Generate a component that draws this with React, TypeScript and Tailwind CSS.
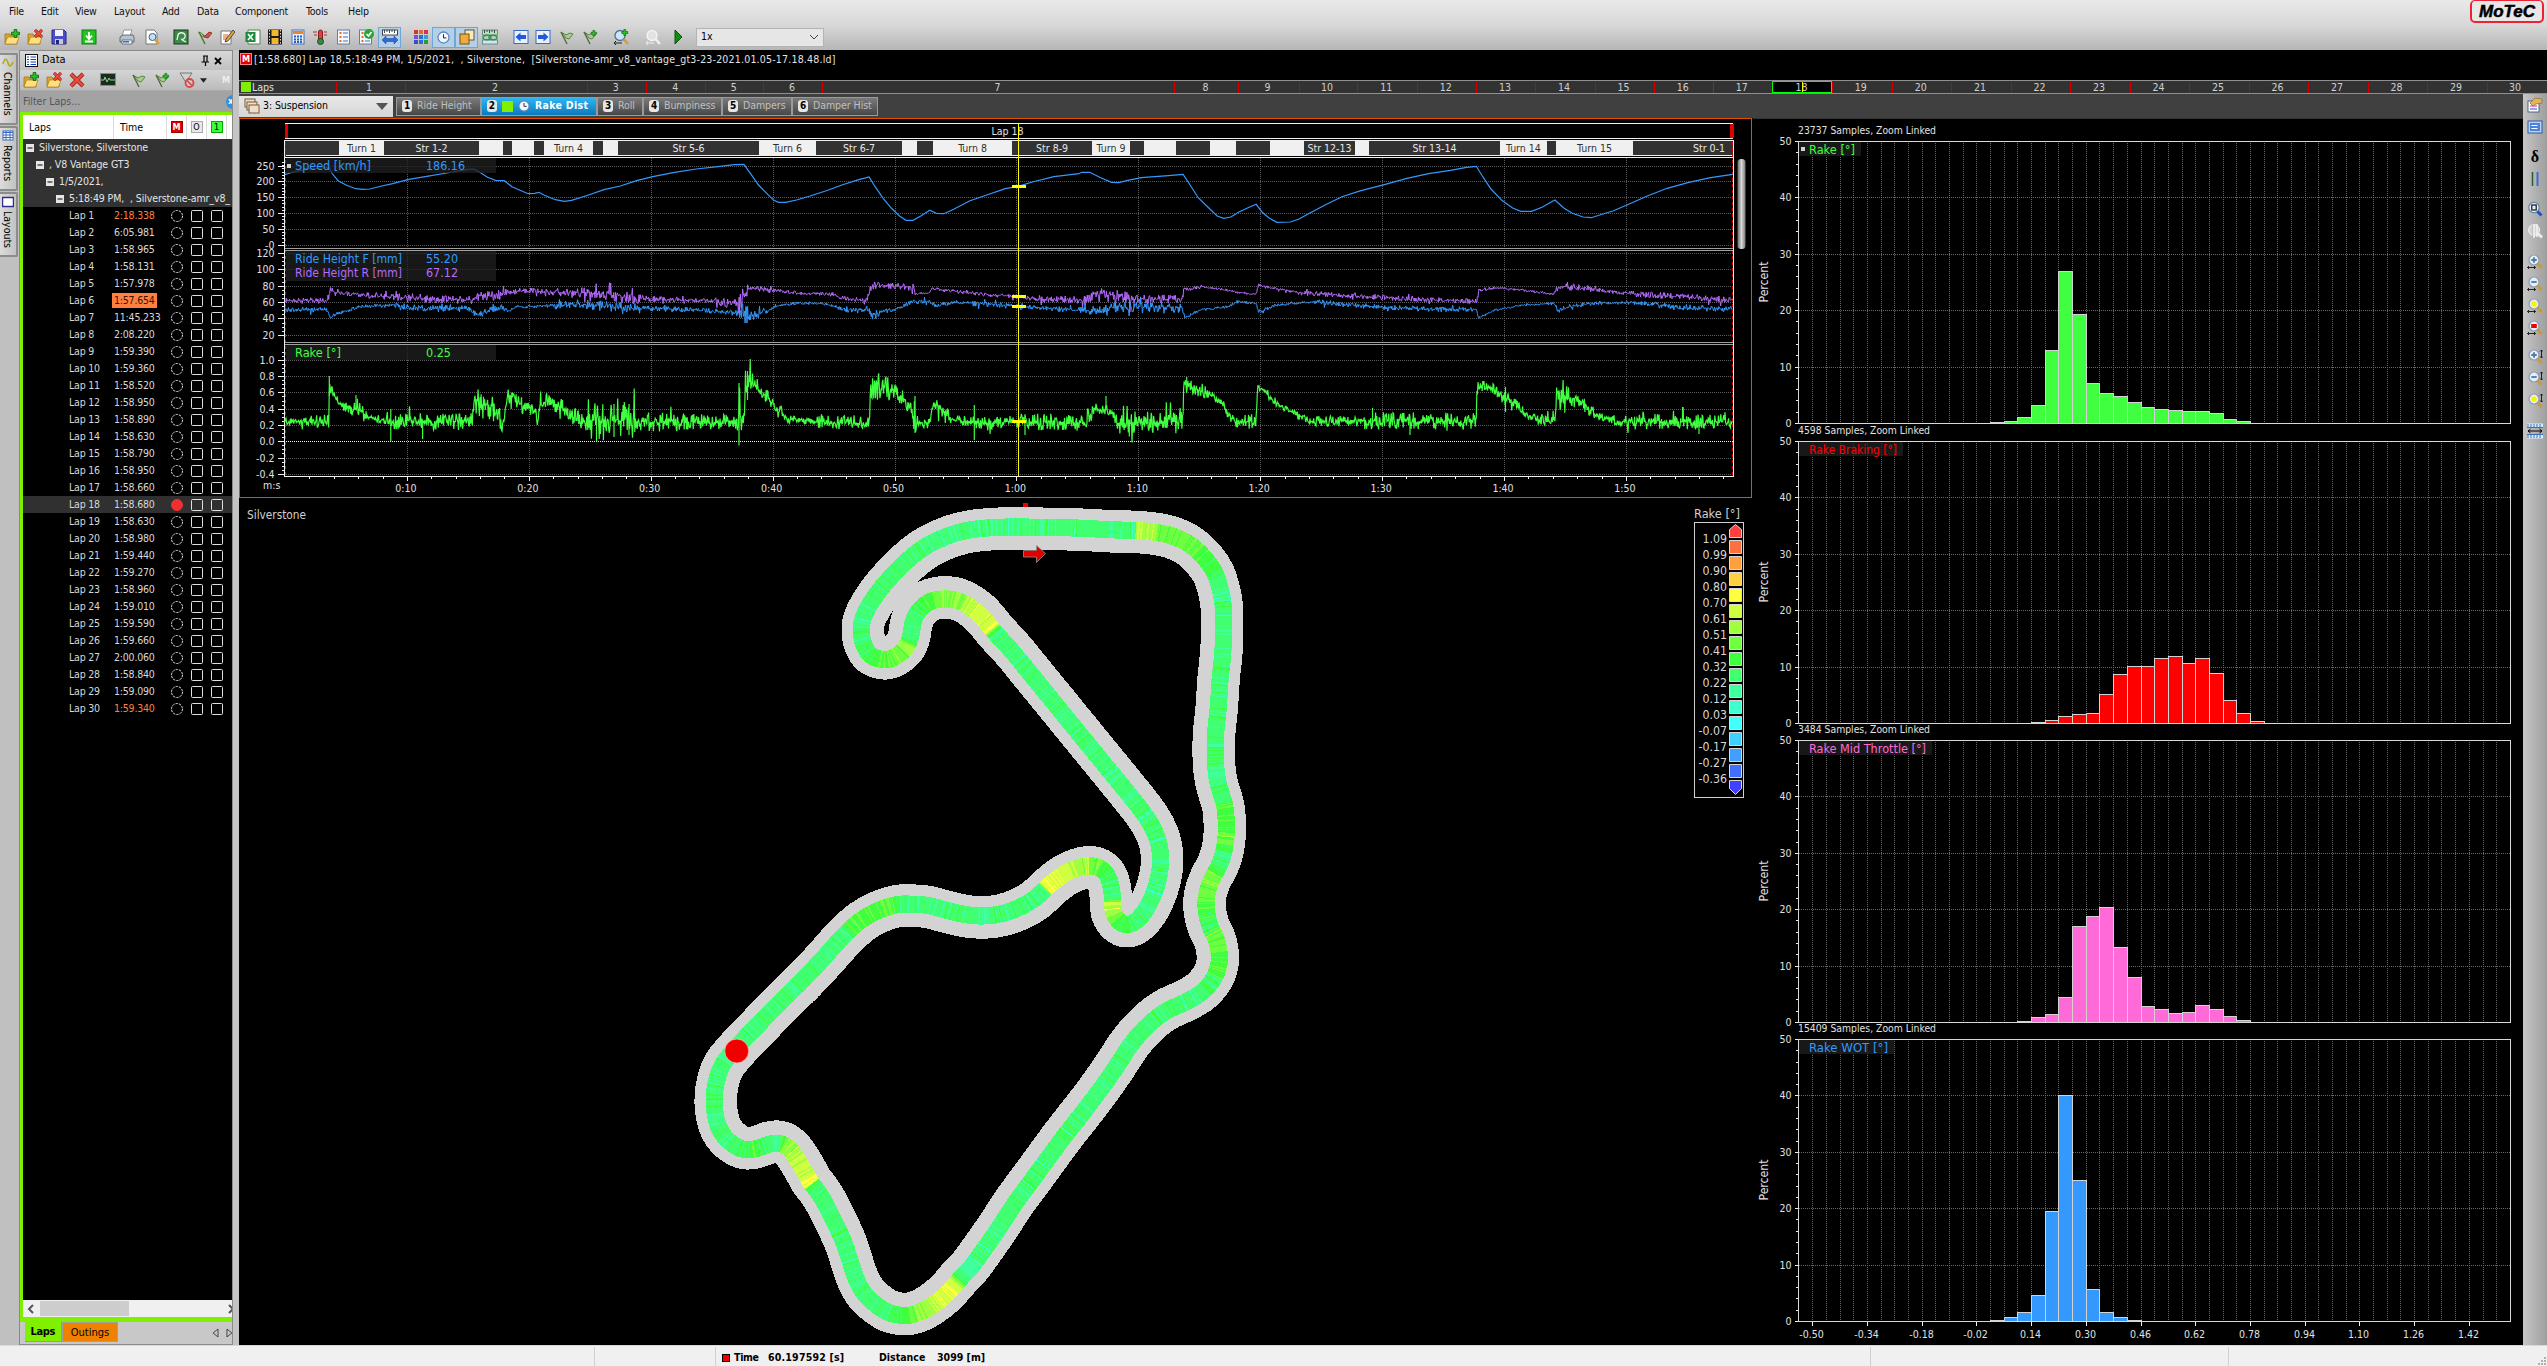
import React from "react";

const TAHOMA = "font-['DejaVu_Sans_Condensed','Noto_Sans',sans-serif]";
const SVG_FONT = '"DejaVu Sans Condensed","Noto Sans",sans-serif';

/* ---------- shared helpers ---------- */

function makeRandom(seed: number) {
  let a = seed;
  return () => {
    a = (a + 0x6d2b79f5) | 0;
    let t = Math.imul(a ^ (a >>> 15), 1 | a);
    t = (t + Math.imul(t ^ (t >>> 7), 61 | t)) ^ t;
    return ((t ^ (t >>> 14)) >>> 0) / 4294967296;
  };
}

type LabelProps = {
  x: number;
  y: number;
  children: React.ReactNode;
  size?: number;
  fill?: string;
  anchor?: "start" | "middle" | "end";
  w?: number;
};

function Label({ x, y, children, size = 10.5, fill = "#e0e0e0", anchor = "start", w }: LabelProps) {
  return (
    <text
      x={x}
      y={y + size * 0.36}
      fontSize={size}
      fill={fill}
      textAnchor={anchor}
      fontFamily={SVG_FONT}
      textLength={w}
      lengthAdjust="spacingAndGlyphs"
    >
      {children}
    </text>
  );
}

/* ---------- icons ---------- */

type IconProps = { children: React.ReactNode; s?: number };
const Ico = ({ children, s = 16 }: IconProps) => (
  <svg width={s} height={s} viewBox="0 0 16 16" className="block shrink-0">
    {children}
  </svg>
);

const FolderShape = () => (
  <>
    <path d="M1 5h5l1 2h6v8H1z" fill="#d9a52b" stroke="#9a7010" strokeWidth=".7" />
    <path d="M3.5 8H15l-2.5 7H1z" fill="#ffdf7e" stroke="#a87b18" strokeWidth=".7" />
  </>
);
const PlusMark = ({ x = 12, y = 4 }) => (
  <g transform={`translate(${x} ${y})`}>
    <path d="M-1.3-4h2.6v2.7H4v2.6H1.3V4h-2.6V1.3H-4v-2.6h2.7z" fill="#22c722" stroke="#075c07" strokeWidth=".8" />
  </g>
);
const FolderAdd = () => (<Ico><FolderShape /><PlusMark x={11.5} y={4.5} /></Ico>);
const FolderRemove = () => (
  <Ico><FolderShape /><path d="M8 1l7 7M15 1L8 8" stroke="#8a1010" strokeWidth="3" /><path d="M8 1l7 7M15 1L8 8" stroke="#e84a3c" strokeWidth="2" /></Ico>
);
const Disk = () => (
  <Ico><path d="M1 1h12l2 2v12H1z" fill="#4b50c8" stroke="#22267e" /><path d="M4 1h8v6H4z" fill="#f2f2ff" /><path d="M4 10h8v5H4z" fill="#c8c8da" /><path d="M5 11h3v4H5z" fill="#22267e" /></Ico>
);
const Download = () => (
  <Ico><rect x="1" y="1" width="14" height="14" fill="#21c421" stroke="#0f7f0f" /><path d="M8 3v6M5 6.5L8 10l3-3.500M4 12.500h8" stroke="#fff" strokeWidth="1.800" fill="none" /></Ico>
);
const Printer = () => (
  <Ico><path d="M5 1h8l-2 6H3z" fill="#fff" stroke="#777" strokeWidth=".7" /><path d="M1 8l3-2h10l1 2v5H1z" fill="#b9c3cf" stroke="#4a5563" strokeWidth=".8" /><path d="M3 11h10v4H3z" fill="#e9eef5" stroke="#4a5563" strokeWidth=".7" /><rect x="4" y="12" width="6" height="1.500" fill="#2b6fd0" /></Ico>
);
const Preview = () => (
  <Ico><path d="M2 1h8l3 3v11H2z" fill="#fff" stroke="#777" /><circle cx="8.500" cy="8" r="3.500" fill="#bfe0fa" stroke="#466" /><path d="M11 11l4 4" stroke="#d9a030" strokeWidth="2.300" /></Ico>
);
const GreenTrack = () => (
  <Ico><rect x="1" y="1" width="14" height="14" fill="#3c8a47" stroke="#163b1b" /><path d="M4 11l1-5c1-3 6-3 7 0s-2 5-4 4M9 11l4 2" stroke="#e9f7e9" fill="none" strokeWidth="1.300" /></Ico>
);
const FlagRed = () => (
  <Ico><path d="M3 4l5 3 4-4 3 1-4 5-4-1z" fill="#e04a3c" stroke="#7a2a22" strokeWidth=".8" /><path d="M1.500 3l3 1 3 4-3-1z" fill="#a9cf8d" stroke="#4f7a3a" strokeWidth=".7" /><path d="M2 3l6 12" stroke="#4a7a3a" strokeWidth="1.500" /></Ico>
);
const EditPage = () => (
  <Ico><path d="M2 2h10v13H2z" fill="#fff" stroke="#777" /><path d="M4 6h5M4 8h5M4 10h4" stroke="#e05a20" /><path d="M14 1l2 2-7 9-3 1 1-3z" fill="#e0a040" stroke="#333" strokeWidth=".8" /></Ico>
);
const Excel = () => (
  <Ico><path d="M3 1h12v14H3z" fill="#fff" stroke="#4a8a4a" /><rect x="0.500" y="3" width="10" height="10" fill="#1f8a3c" /><path d="M3 5l5 6M8 5l-5 6" stroke="#fff" strokeWidth="1.600" /></Ico>
);
const Film = () => (
  <Ico><rect x="1" y="0.500" width="14" height="15" fill="#1a1a1a" /><rect x="4.500" y="1" width="7" height="6" fill="#f2b92d" /><rect x="4.500" y="9" width="7" height="6" fill="#f2b92d" /><path d="M2.500 1v14M13.500 1v14" stroke="#ddd" strokeDasharray="1.500 1.500" /></Ico>
);
const Calc = () => (
  <Ico><rect x="2" y="1" width="12" height="14" fill="#e8f0fb" stroke="#4672b8" /><rect x="3" y="2" width="10" height="3" fill="#e7842b" /><path d="M4 7.500h9M4 10.500h9M4 13h9" stroke="#2b5db8" strokeWidth="1.800" strokeDasharray="2 1" /></Ico>
);
const Thermo = () => (
  <Ico><rect x="6.500" y="1" width="4" height="11" rx="2" fill="#e04040" stroke="#7a1f1f" /><circle cx="8.500" cy="12.500" r="3" fill="#2f8f3c" stroke="#184d1f" /><path d="M1 3h4M2 6h3M12 3h3M12 6h3" stroke="#a33" /></Ico>
);
const ListPage = ({ check = false }) => (
  <Ico><rect x="1.500" y="1" width="12" height="14" fill="#f5f9ff" stroke="#5c7fae" /><path d="M3.500 4h2M3.500 8h2M3.500 12h2" stroke="#e07020" strokeWidth="1.800" /><path d="M7 4h5M7 8h5M7 12h5" stroke="#4070c0" />{check && (<><circle cx="11" cy="5" r="5" fill="#25a83a" /><path d="M8.500 5l2 2 3-4" stroke="#fff" strokeWidth="1.600" fill="none" /></>)}</Ico>
);
const RulerArrows = ({ green = false }) => (
  <Ico><rect x="0.500" y="1" width="15" height="5" fill={green ? "#bde0c0" : "#fff"} stroke={green ? "#4a7f86" : "#222"} strokeWidth=".8" /><path d="M2.500 1v3M5 1v2M7.500 1v3M10 1v2M12.500 1v3" stroke="#222" strokeWidth=".8" />{green ? <><rect x="0.500" y="11" width="15" height="4" fill="#cfe6f5" stroke="#4a7f86" strokeWidth=".8" /><ellipse cx="5" cy="8.500" rx="4" ry="2.300" fill="none" stroke="#2f9a3f" strokeWidth="1.500" /><ellipse cx="11" cy="8.500" rx="4" ry="2.300" fill="none" stroke="#2f9a3f" strokeWidth="1.500" /></> : <path d="M0 11l4-4v2.500h8V7l4 4-4 4v-2.500H4V15z" fill="#2f6bd8" stroke="#163f8a" strokeWidth=".5" />}</Ico>
);
const GridIcon = () => (
  <Ico>{["#e03030", "#e07020", "#d03060", "#7a4fd0", "#2f6bd8", "#2fa0d8", "#3a4fd0", "#2f6bd8", "#2b9a3c"].map((c, i) => (<rect key={i} x={1 + (i % 3) * 5} y={1 + Math.floor(i / 3) * 5} width="4" height="4" fill={c} />))}</Ico>
);
const Clock = ({ s = 16 }) => (
  <Ico s={s}><circle cx="8" cy="8" r="6.800" fill="#f2f8ff" stroke="#5b86c4" strokeWidth="1.600" /><path d="M8 4v4.500h3.500" stroke="#222" fill="none" strokeWidth="1.200" /></Ico>
);
const CopyIcon = () => (
  <Ico><rect x="6" y="1" width="9" height="10" fill="#ffe9b0" stroke="#555" /><rect x="1" y="5" width="9" height="10" fill="#efab3c" stroke="#7a5210" /></Ico>
);
const ArrowBtn = ({ flip = false }) => (
  <Ico><g transform={flip ? "translate(16 0) scale(-1 1)" : undefined}><rect x="1" y="1.500" width="14" height="13" fill="#e8f1ff" stroke="#3a6bc0" /><path d="M2.500 8l5-4.500V6H13v4H7.500v2.500z" fill="#2257d8" /></g></Ico>
);
const Flag = ({ plus = false }) => (
  <Ico><path d="M2 3l5 3 4-2 3 1-4 5-3-1z" fill="#a9cf8d" stroke="#4f7a3a" strokeWidth=".9" /><path d="M2 3l6 12" stroke="#4f6a3a" strokeWidth="1.400" />{plus && <g transform="translate(5.500 0) scale(.7)"><PlusMark x={9} y={6} /></g>}</Ico>
);
const Lens = ({ off = false, plus = false }) => (
  <Ico><circle cx="7" cy="6.500" r="5" fill={off ? "#e2e2e2" : "#cfe6fa"} stroke={off ? "#f4f4f4" : "#52708c"} strokeWidth="1.300" /><path d="M10.500 10l4.500 5" stroke={off ? "#efefef" : "#caa040"} strokeWidth="2.600" /><path d="M1 14h8M3 12l-2 2 2 2" stroke={off ? "#eee" : "#222"} fill="none" />{plus && <g transform="translate(5 -1) scale(.75)"><PlusMark x={9} y={6} /></g>}</Ico>
);
const Play = () => (<Ico><path d="M5 1l7 7-7 7z" fill="#138a13" stroke="#075607" /></Ico>);

const ZoomTool = ({ kind, vertical = false }: { kind: string; vertical?: boolean }) => (
  <Ico>
    <circle cx="7" cy="6" r="5" fill="#e3f0fc" stroke="#8a9bb0" strokeWidth="1.200" />
    <path d="M10.500 9.500l4 4.500" stroke="#c79a3c" strokeWidth="3" />
    {kind === "plus" && <path d="M7 3.300v5.400M4.300 6h5.400" stroke="#56789e" strokeWidth="1.800" />}
    {kind === "minus" && <path d="M4.300 6h5.400" stroke="#56789e" strokeWidth="1.800" />}
    {kind === "sun" && <circle cx="7" cy="6" r="2.800" fill="#fff200" />}
    {kind === "red" && <rect x="4.200" y="4" width="5.600" height="4" fill="#f00000" />}
    {vertical ? <path d="M14.500 1v8M13 2.500L14.500 1 16 2.500M13 7.500L14.500 9 16 7.500" stroke="#111" fill="none" strokeWidth=".9" /> : <path d="M.5 13.500h8M2 12L.5 13.500 2 15M7 12l1.500 1.500L7 15" stroke="#111" fill="none" strokeWidth=".9" />}
  </Ico>
);

/* ---------- top area ---------- */

const MENU: [string, string][] = [
  ["File", "w-[32px]"], ["Edit", "w-[34px]"], ["View", "w-[39px]"], ["Layout", "w-[48px]"], ["Add", "w-[35px]"],
  ["Data", "w-[38px]"], ["Component", "w-[71px]"], ["Tools", "w-[42px]"], ["Help", "w-[40px]"],
];

const Cell = ({ w, on = false, children }: { w: string; on?: boolean; children?: React.ReactNode }) => (
  <div className={`flex h-[21px] shrink-0 items-center justify-center ${w} ${on ? "border border-[#6da7d8] bg-[#b5d0e6]" : ""}`}>{children}</div>
);

function TopBars() {
  return (
    <div className="flex h-[50px] justify-between bg-gradient-to-b from-[#e9e9e9] via-[#d8d8d8] to-[#b6b6b6]">
      <div className="flex flex-col">
        <div className="flex h-6 items-center pl-[9px] text-[10.5px] tracking-[-0.2px] text-[#111]">
          {MENU.map(([m, w]) => (<span key={m} className={w}>{m}</span>))}
        </div>
        <div className="flex h-[26px] items-center">
          <Cell w="w-[23px]"><FolderAdd /></Cell>
          <Cell w="w-[24px]"><FolderRemove /></Cell>
          <Cell w="w-[23px]"><Disk /></Cell>
          <Cell w="w-[38px]"><Download /></Cell>
          <Cell w="w-[37px]"><Printer /></Cell>
          <Cell w="w-[14px]"><Preview /></Cell>
          <Cell w="w-[43px]"><GreenTrack /></Cell>
          <Cell w="w-[6px]"><FlagRed /></Cell>
          <Cell w="w-[38px]"><EditPage /></Cell>
          <Cell w="w-[14px]"><Excel /></Cell>
          <Cell w="w-[29px]"><Film /></Cell>
          <Cell w="w-[17px]"><Calc /></Cell>
          <Cell w="w-[28px]"><Thermo /></Cell>
          <Cell w="w-[20px]"><ListPage /></Cell>
          <Cell w="w-[24px]"><ListPage check /></Cell>
          <Cell w="w-[23px]" on><RulerArrows /></Cell>
          <Cell w="w-[31px]"><div className="pl-2"><GridIcon /></div></Cell>
          <Cell w="w-[23px]" on><Clock s={13} /></Cell>
          <Cell w="w-[23px]" on><CopyIcon /></Cell>
          <Cell w="w-[23px]"><RulerArrows green /></Cell>
          <Cell w="w-[39px]"><ArrowBtn /></Cell>
          <Cell w="w-[6px]"><ArrowBtn flip /></Cell>
          <Cell w="w-[41px]"><Flag /></Cell>
          <Cell w="w-[6px]"><Flag plus /></Cell>
          <Cell w="w-[56px]"><Lens plus /></Cell>
          <Cell w="w-[0px]"><div className="-mr-2"><Lens off /></div></Cell>
          <Cell w="w-[47px]"><div className="pl-[10px]"><Play /></div></Cell>
          <div className="flex h-[19px] w-[128px] items-center justify-between border border-[#b4b4b4] bg-[#e6e6e6] px-1 text-[10.5px] text-black">
            <span>1x</span>
            <svg width="10" height="6" viewBox="0 0 10 6"><path d="M1 1l4 4 4-4" fill="none" stroke="#444" /></svg>
          </div>
        </div>
      </div>
      <div className="mr-[3px] flex h-[23px] w-[74px] items-center justify-center rounded-[5px] border-2 border-t-1 border-[#ee2235] bg-[#e8e8e8]">
        <span className="pt-[1px] font-['Liberation_Sans',sans-serif] text-[17px] leading-none font-bold text-black italic [-webkit-text-stroke:0.5px_black]">MoTeC</span>
      </div>
    </div>
  );
}

/* ---------- data panel ---------- */

const LAPS = [
  "2:18.338", "6:05.981", "1:58.965", "1:58.131", "1:57.978", "1:57.654", "11:45.233", "2:08.220", "1:59.390", "1:59.360",
  "1:58.520", "1:58.950", "1:58.890", "1:58.630", "1:58.790", "1:58.950", "1:58.660", "1:58.680", "1:58.630", "1:58.980",
  "1:59.440", "1:59.270", "1:58.960", "1:59.010", "1:59.590", "1:59.660", "2:00.060", "1:58.840", "1:59.090", "1:59.340",
];

const TREE: [string, string][] = [
  ["pl-[3px]", "Silverstone, Silverstone"],
  ["pl-[13px]", ", V8 Vantage GT3"],
  ["pl-[23px]", "1/5/2021,"],
  ["pl-[33px]", "5:18:49 PM,  , Silverstone-amr_v8_"],
];

function SideTab({ h, label, children }: { h: string; label: string; children: React.ReactNode }) {
  return (
    <div className={`mb-[1px] flex w-[18px] flex-col items-center gap-[3px] rounded-r-[2px] border-2 border-l-0 border-[#8c8c8c] bg-gradient-to-r from-[#dcdcdc] to-[#c2c2c2] pt-[2px] ${h}`}>
      <svg width="12" height="12" viewBox="0 0 12 12" className="shrink-0">{children}</svg>
      <span className="text-[10.5px] leading-none text-black [writing-mode:vertical-rl]">{label}</span>
    </div>
  );
}

function LapRow({ n, time }: { n: number; time: string }) {
  const sel = n === 18;
  const color = n === 6 ? "bg-[#ff8040] text-[#3a1400]" : n === 1 || n === 30 ? "text-[#ff8040]" : "text-[#d8d8d8]";
  return (
    <div className={`flex h-[17px] items-center text-[10.5px] tracking-[-0.2px] ${sel ? "bg-[#303030]" : ""}`}>
      <span className="w-[89px] pl-[46px] whitespace-nowrap text-[#d8d8d8]">Lap {n}</span>
      <span className="w-[58px]"><span className={`inline-block h-[15px] px-[2px] leading-[15px] ${color}`}>{time}</span></span>
      <svg width="60" height="16" viewBox="0 0 60 16" className="shrink-0">
        <circle cx="7" cy="8" r="5.500" fill={sel ? "#f03030" : "none"} stroke={sel ? "#f03030" : "#e0e0e0"} strokeDasharray={sel ? undefined : "2.400 1"} />
        <rect x="21.500" y="2.500" width="11" height="11" rx="1" fill="none" stroke="#e0e0e0" />
        <rect x="41.500" y="2.500" width="11" height="11" rx="1" fill="none" stroke="#e0e0e0" />
      </svg>
    </div>
  );
}

function DataPanel() {
  return (
    <div className="flex w-[239px] shrink-0 bg-[#c4c4c4]">
      <div className="flex w-[19px] shrink-0 flex-col bg-[#c0c0c0] pt-[3px]">
        <SideTab h="h-[72px]" label="Channels"><path d="M1 7c2-7 4-5 5-1s3 4 5-1" fill="none" stroke="#b5a800" strokeWidth="1.500" /></SideTab>
        <SideTab h="h-[65px]" label="Reports"><rect x="1" y="1" width="10" height="9" fill="#fff" stroke="#3a6bc0" /><path d="M1 2.500h10M4 1v9M8 1v9M1 5h10M1 7.500h10" stroke="#3a6bc0" /></SideTab>
        <SideTab h="h-[65px]" label="Layouts"><rect x="0.500" y="1.500" width="11" height="9" fill="#fff" stroke="#30308a" strokeWidth="1.500" /></SideTab>
      </div>
      <div className="flex w-[214px] shrink-0 flex-col overflow-hidden border-2 border-t-1 border-b-1 border-l-1 border-r-1 border-[#8a8a8a] bg-[#c8c8c8]">
        <div className="flex h-[19px] shrink-0 items-center bg-gradient-to-b from-[#d8d8d8] to-[#c0c0c0] pl-[5px] text-[11px] text-black">
          <svg width="13" height="13" viewBox="0 0 13 13" className="mr-1"><rect x=".5" y=".5" width="12" height="12" fill="#fff" stroke="#111" /><path d="M2 3h2M2 5.500h2M2 8h2M2 10.500h2M5.500 3H11M5.500 5.500H11M5.500 8H11M5.500 10.500H11" stroke="#1040d0" /></svg>
          <span className="w-[158px]">Data</span>
          <svg width="22" height="12" viewBox="0 0 22 12"><path d="M3 1h5M4 1v6M7 1v6M1.500 7h7.500M5.500 7v4" stroke="#000" fill="none" strokeWidth="1.200" /><path d="M15 3l6 6M21 3l-6 6" stroke="#000" strokeWidth="1.800" /></svg>
        </div>
        <div className="flex h-[21px] shrink-0 items-center gap-[7px] border-b border-[#aaa] bg-gradient-to-b from-[#d4d4d4] to-[#bcbcbc] pl-[3px]">
          <FolderAdd />
          <FolderRemove />
          <Ico><path d="M2 2l12 12M14 2L2 14" stroke="#8a1010" strokeWidth="4" /><path d="M2 2l12 12M14 2L2 14" stroke="#e84a3c" strokeWidth="2.800" /></Ico>
          <div className="ml-2"><Ico><rect x=".5" y="1.500" width="15" height="12" fill="#1d2a20" stroke="#888" /><path d="M1 8h3l1-3 2 5 2-4 1 2h5" stroke="#7fdc8a" fill="none" /></Ico></div>
          <div className="ml-2"><Flag /></div>
          <Flag plus />
          <div className="ml-[2px]"><Ico><path d="M1 1h12L9 7v6L6 9z" fill="#d0d0d0" stroke="#777" /><circle cx="10.500" cy="11" r="4" fill="#c8c8c8" stroke="#d44" strokeWidth="1.800" /><path d="M8 8.500l5 5" stroke="#d44" strokeWidth="1.500" /></Ico></div>
          <svg width="7" height="5" viewBox="0 0 8 5" className="-ml-[2px] shrink-0"><path d="M0 0h8L4 5z" fill="#222" /></svg>
          <span className="pl-2 text-[9px] leading-none font-bold text-[#eee]">M</span>
        </div>
        <div className="flex h-[21px] shrink-0 items-center justify-between bg-[#a3a3a3] pl-[3px] text-[10.5px] text-[#565656]">
          <span>Filter Laps...</span>
          <div className="-mr-2 flex size-[14px] items-center rounded-full bg-[#2f8fe0] pl-[2px] text-[9px] font-bold text-white">x</div>
        </div>
        <div className="flex min-h-0 flex-1 flex-col border-y-[4px] border-t-[3px] border-b-[5px] border-l-[3px] border-[#80f000] bg-black">
          <div className="flex h-6 shrink-0 items-center bg-white text-[10.5px] text-black">
            <span className="h-full w-[91px] border-r border-[#ddd] pl-[6px] leading-6">Laps</span>
            <span className="h-full w-[53px] border-r border-[#ddd] pl-[6px] leading-6">Time</span>
            <div className="flex h-full w-5 items-center justify-center border-r border-[#ddd]"><span className="flex h-3 w-3 items-center justify-center border border-[#900] bg-[#e00000] text-[9px] leading-none font-bold text-white">M</span></div>
            <div className="flex h-full w-5 items-center justify-center border-r border-[#ddd]"><span className="flex h-3 w-3 items-center justify-center border border-[#aaa] bg-[#e8e8e8] text-[9px] leading-none">O</span></div>
            <div className="flex h-full w-5 items-center justify-center border-r border-[#ddd]"><span className="flex h-3 w-3 items-center justify-center border border-[#0a0] bg-[#3cff3c] text-[9px] leading-none">1</span></div>
          </div>
          <div className="bg-[#323232]">
            {TREE.map(([pad, t]) => (
              <div key={t} className={`flex h-[17px] items-center gap-[5px] text-[10.5px] tracking-[-0.1px] whitespace-pre text-[#e4e4e4] ${pad}`}>
                <svg width="8" height="8" viewBox="0 0 8 8" className="shrink-0"><rect width="8" height="8" fill="#e6e6e6" /><path d="M1.500 4h5" stroke="#000" /></svg>
                <span>{t}</span>
              </div>
            ))}
          </div>
          <div className="flex-1 overflow-hidden">
            {LAPS.map((t, i) => (<LapRow key={i} n={i + 1} time={t} />))}
          </div>
          <div className="flex h-[17px] shrink-0 items-center bg-[#f0f0f0]">
            <svg width="17" height="10" viewBox="0 0 17 10"><path d="M10 1L6 5l4 4" fill="none" stroke="#555" strokeWidth="2" /></svg>
            <div className="h-[15px] w-[89px] bg-[#cdcdcd]" />
            <svg width="103" height="10" viewBox="0 0 103 10"><path d="M100 1l4 4-4 4" fill="none" stroke="#555" strokeWidth="2" /></svg>
          </div>
        </div>
        <div className="flex h-[22px] shrink-0 pl-[5px] text-[11px] text-black">
          <div className="h-5 w-[37px] border-r border-b border-[#999] bg-[#80f000] text-center leading-[20px] font-bold tracking-[-0.3px]">Laps</div>
          <div className="h-5 w-[57px] border border-[#a0a0a0] bg-[#f08000] text-center leading-[20px]">Outings</div>
          <svg width="115" height="20" viewBox="0 0 115 20"><path d="M101 7v8l-5-4zM110 7v8l5-4z" fill="none" stroke="#444" /></svg>
        </div>
      </div>
    </div>
  );
}

/* ---------- lap strip and worksheet tabs ---------- */

const LAP_EDGES = (() => {
  const e = [239, 335.7, 404.6, 586.7, 646.3, 705.4, 763.4, 822, 1174.4, 1237.8, 1298.5, 1357, 1416.7, 1476.3, 1535, 1594.5, 1654, 1713, 1772, 1831.5];
  for (let i = 0; i <= 10; i++) e.push(1891.6 + i * 59.49);
  e.push(2545);
  return e;
})();

function LapStrip() {
  return (
    <svg width="2308" height="14" viewBox="239 80 2308 14" className="block shrink-0 bg-[#323232]" shapeRendering="crispEdges">
      <path d="M239 80.500H2547M239 93.500H2547" stroke="#909090" />
      <rect x="241" y="82" width="10" height="10" fill="#80f000" />
      <Label x={252} y={87} w={22}>Laps</Label>
      {LAP_EDGES.slice(1, -1).map((x, i) => (
        <React.Fragment key={i}>
          <path d={`M${Math.round(x) + 0.5} 81.500v11`} stroke={i === 16 ? "#484848" : "#d00000"} />
          {i + 1 !== 18 && <Label x={i === 0 ? 369 : (x + LAP_EDGES[i + 2]) / 2 - 0.7} y={87.300} anchor="middle" fill="#d0d0d0">{i + 1}</Label>}
        </React.Fragment>
      ))}
      <rect x="1772.500" y="81.500" width="59" height="11" fill="#000" stroke="#00ff00" strokeWidth="1.500" />
      <Label x={1801.500} y={87.300} anchor="middle" fill="#d0d0d0">18</Label>
      <path d="M1802.500 82v10" stroke="#ffff00" />
    </svg>
  );
}

const TABS: [string, string, string][] = [
  ["1", "Ride Height", "w-[85px]"], ["2", "Rake Dist", "w-[116px]"], ["3", "Roll", "w-[46px]"],
  ["4", "Bumpiness", "w-[79px]"], ["5", "Dampers", "w-[70px]"], ["6", "Damper Hist", "w-[86px]"],
];

function WorksheetTabs() {
  return (
    <div className="flex h-6 items-center bg-[#404040]">
      <div className="mr-[3px] flex h-[21px] w-[154px] items-center bg-gradient-to-b from-[#e8e8e8] to-[#d6d6d6] px-[5px] text-[10.5px] tracking-[-0.1px] text-black">
        <svg width="18" height="16" viewBox="0 0 18 16" className="mr-[1px]"><g fill="#f0dfc8" stroke="#7a5a3a"><rect x="1" y="1" width="10" height="8" /><rect x="3" y="4" width="10" height="8" /><rect x="5" y="7" width="10" height="8" /></g></svg>
        <span className="flex-1">3: Suspension</span>
        <svg width="12" height="7" viewBox="0 0 12 7"><path d="M0 0h12L6 7z" fill="#555" /></svg>
      </div>
      {TABS.map(([n, t, w]) => {
        const on = n === "2";
        return (
          <div key={n} className={`flex h-[19px] shrink-0 items-center gap-[5px] border border-[#9a9a9a] pl-[5px] text-[10.5px] whitespace-nowrap ${w} ${on ? "bg-gradient-to-b from-[#2fb4f2] to-[#0b79bd] font-bold tracking-[0.3px] text-white" : "bg-gradient-to-b from-[#7a7a7a] to-[#484848] tracking-[-0.05px] text-[#c0c0c0]"}`}>
            <span className="flex h-[12px] w-[10px] items-center justify-center rounded-[3px] bg-[#e6e6e6] text-[10px] leading-none font-bold text-black">{n}</span>
            {on && <span className="h-[11px] w-[11px] bg-[#80f000]" />}
            {on && <Clock s={12} />}
            <span>{t}</span>
          </div>
        );
      })}
    </div>
  );
}

/* ---------- time graph ---------- */

type Pt = [number, number, number?];

/* Two recorded spans share one axis; each is converted into page units. */
const joinSpans = (a: Pt[], b: Pt[]): Pt[] => [
  ...a.map(([x, y, n]): Pt => [230 + x / 1.8447, 80 + y / 3, n === undefined ? undefined : n / 3]),
  ...b.map(([x, y, n]): Pt => [1060 + x / 1.8447, 70 + y / 3, n === undefined ? undefined : n / 3]).filter((p) => p[0] > 1080),
];

const SPEED = joinSpans(
  [[101, 284], [115, 277], [140, 268], [170, 264], [183, 262], [188, 280], [200, 303], [215, 316], [232, 326], [245, 328], [258, 327], [280, 318], [300, 311], [330, 298], [360, 290], [400, 279], [425, 272], [440, 268], [450, 267], [460, 276], [475, 292], [490, 301], [506, 302], [520, 320], [535, 331], [550, 341], [562, 340], [570, 337], [580, 346], [600, 359], [617, 364], [630, 361], [660, 346], [690, 329], [720, 318], [750, 302], [780, 290], [820, 277], [860, 267], [900, 260], [930, 254], [948, 253], [960, 280], [975, 315], [990, 340], [1003, 361], [1012, 367], [1025, 367], [1045, 360], [1070, 348], [1100, 332], [1130, 314], [1160, 299], [1179, 291], [1190, 320], [1205, 355], [1220, 385], [1235, 408], [1247, 421], [1260, 421], [1275, 407], [1291, 391], [1303, 400], [1317, 401], [1335, 388], [1365, 362], [1400, 343], [1430, 326], [1454, 319], [1480, 306], [1520, 290], [1566, 281]],
  [[40, 307], [55, 307], [75, 323], [95, 337], [108, 338], [125, 331], [150, 323], [200, 317], [227, 313], [240, 345], [255, 383], [275, 415], [290, 438], [302, 445], [315, 441], [330, 426], [350, 411], [362, 403], [373, 427], [385, 443], [400, 457], [425, 456], [440, 448], [460, 430], [490, 404], [520, 380], [555, 362], [600, 343], [640, 325], [680, 311], [720, 301], [750, 292], [768, 289], [780, 320], [795, 357], [815, 391], [835, 414], [850, 424], [870, 424], [890, 411], [913, 390], [930, 415], [945, 430], [965, 441], [980, 443], [1000, 433], [1020, 423], [1050, 402], [1080, 380], [1120, 355], [1160, 337], [1200, 323], [1241, 313]],
);
const RIDE_R = joinSpans(
  [[101, 662, 7], [180, 662, 9], [184, 632], [200, 639, 5], [250, 646, 9], [300, 652], [350, 658, 9], [450, 660, 10], [460, 648, 12], [500, 645], [510, 635, 7], [560, 632, 7], [600, 636, 12], [640, 638, 13], [700, 645, 15], [760, 655, 7], [830, 660, 5], [895, 662, 8], [910, 670, 12], [938, 672, 30], [950, 640, 15], [956, 625, 7], [1000, 630, 4], [1050, 640, 4], [1110, 642, 4], [1130, 655, 6], [1177, 662, 8], [1181, 622, 9], [1190, 616, 8], [1250, 620, 10], [1260, 618, 8], [1265, 640, 3], [1290, 640, 3], [1295, 625, 5], [1330, 633, 5], [1375, 640, 5], [1450, 650, 5], [1480, 656, 9], [1566, 660, 9]],
  [[45, 692, 12], [60, 675], [80, 670], [100, 678, 16], [130, 688, 10], [225, 687, 9], [229, 658, 5], [265, 650, 3], [300, 658, 3], [330, 668, 3], [362, 672, 3], [366, 645, 3], [400, 657, 3], [440, 668, 6], [500, 674, 6], [560, 680, 6], [640, 686, 6], [700, 690, 6], [768, 694, 7], [773, 660, 4], [800, 654, 3], [850, 660, 3], [912, 672, 6], [916, 652, 9], [935, 650, 8], [980, 658, 5], [1050, 670, 8], [1140, 680, 8], [1241, 690, 8]],
);
const RIDE_F = joinSpans(
  [[101, 688, 6], [180, 690, 7], [184, 712, 6], [200, 700, 4], [235, 682, 5], [300, 675, 7], [350, 685, 7], [440, 685, 8], [455, 707, 7], [480, 690], [500, 680], [512, 695, 4], [530, 680, 4], [600, 677, 9], [650, 672, 12], [700, 680, 12], [760, 685, 7], [850, 690, 6], [930, 697, 9], [940, 695, 24], [956, 710, 10], [990, 695, 4], [1015, 675, 4], [1050, 670, 3], [1090, 670, 3], [1120, 680, 5], [1130, 690, 5], [1177, 690, 6], [1185, 708, 10], [1200, 697, 5], [1240, 682, 5], [1256, 665, 6], [1290, 665, 3], [1300, 677, 4], [1340, 667, 4], [1370, 670, 7], [1430, 675, 5], [1500, 685, 6], [1566, 690, 8]],
  [[45, 720, 9], [60, 725], [100, 710, 14], [225, 713, 7], [230, 742, 4], [260, 720, 3], [310, 710, 3], [330, 695, 3], [362, 700, 3], [366, 725, 4], [400, 705, 3], [470, 695, 6], [520, 703, 6], [600, 712, 6], [700, 718, 6], [768, 718, 6], [773, 742, 3], [800, 722, 3], [850, 705, 3], [912, 700, 4], [918, 720, 8], [950, 708, 5], [980, 700, 4], [1060, 698, 6], [1100, 703, 6], [1140, 712, 7], [1241, 718, 6]],
);
const RAKE = joinSpans(
  [[101, 1024, 8], [150, 1024, 14], [182, 1026, 15], [184, 910, 14], [190, 935, 12], [200, 970, 9], [225, 990, 12], [235, 985, 18], [250, 1005, 9], [265, 1018, 9], [300, 1025, 16], [350, 1025, 16], [448, 1025, 20], [453, 965, 24], [460, 975], [485, 985], [503, 1030, 10], [512, 950, 18], [530, 970, 16], [560, 990, 14], [568, 1030, 8], [573, 965, 15], [610, 975, 22], [625, 1010, 25], [650, 1020, 42], [680, 1020, 44], [735, 1022, 40], [750, 1025, 18], [860, 1025, 15], [935, 1028, 20], [940, 1000, 80], [948, 1040, 30], [951, 910, 35], [965, 915, 15], [990, 950, 14], [1010, 990, 14], [1030, 1015, 9], [1050, 1022, 7], [1080, 1025, 14], [1179, 1030, 14], [1182, 915, 30], [1200, 910, 22], [1220, 925, 16], [1245, 960, 18], [1258, 1000, 38], [1268, 1030, 10], [1292, 1030, 8], [1296, 972, 14], [1315, 990, 14], [1335, 1020, 10], [1370, 1028, 13], [1450, 1025, 16], [1566, 1028, 22]],
  [[45, 1060, 20], [62, 1020, 12], [95, 1020, 17], [105, 1060, 22], [226, 1055, 16], [229, 940, 17], [245, 950, 14], [270, 970, 8], [295, 990, 8], [312, 1040, 8], [325, 1055, 14], [361, 1055, 12], [365, 945, 8], [380, 970, 6], [400, 1005, 6], [440, 1035, 7], [460, 1055, 10], [560, 1052, 17], [767, 1057, 16], [771, 945, 10], [800, 955, 9], [820, 990, 16], [840, 1000, 10], [860, 1035, 8], [880, 1045, 12], [913, 1055, 15], [916, 970, 35], [940, 980, 17], [965, 1000, 15], [990, 1038, 9], [1020, 1050, 12], [1060, 1055, 15], [1241, 1055, 14]],
);

function tracePath(points: Pt[], noise: boolean, seed: number, gain = 1.3, step = 0.6) {
  const rnd = makeRandom(seed);
  let d = "";
  let amp = 2;
  for (let i = 0; i < points.length - 1; i++) {
    const [x0, y0, n0] = points[i];
    const [x1, y1] = points[i + 1];
    if (n0 !== undefined) amp = n0;
    if (!noise) {
      d += `${i ? "L" : "M"}${x0.toFixed(1)} ${y0.toFixed(1)}`;
      continue;
    }
    const count = Math.max(1, Math.round((x1 - x0) / step));
    for (let k = 0; k < count; k++) {
      const u = k / count;
      const r = rnd() * 2 - 1;
      const spike = rnd() < 0.06 ? 1.9 : 1;
      const y = y0 + (y1 - y0) * u + Math.sign(r) * Math.pow(Math.abs(r), 1.6) * amp * gain * spike;
      d += `${d ? "L" : "M"}${(x0 + (x1 - x0) * u).toFixed(1)} ${y.toFixed(1)}`;
    }
  }
  const last = points[points.length - 1];
  return d + `L${last[0].toFixed(1)} ${last[1].toFixed(1)}`;
}

const RAKE_SPIKES: [number, number, number][] = [
  [329.3, 376, 396], [356, 395, 410], [390.8, 409, 441], [422.6, 425, 439], [596.5, 420, 441], [739, 383, 445.5], [747.5, 371, 400],
  [915, 396, 433], [974.3, 405, 440], [1025, 423, 435], [1106, 396, 410], [1129.3, 420, 436.5], [1186.7, 377, 390], [1372.500, 408, 424], [1410, 422, 435], [1505.5, 387, 412], [1682.500, 407, 420], [1699, 422, 434],
  [629, 404, 435], [614, 404, 437],
];

const SECTION_EDGES = [285, 339, 384, 478.8, 503.2, 511.9, 534, 543.9, 593.2, 603, 618, 759, 816, 902.2, 916.8, 933, 1012.2, 1092, 1130, 1144, 1176, 1210, 1236, 1269.8, 1304, 1355, 1369, 1500, 1546.8, 1556, 1633, 1733];
const SECTION_NAMES: Record<number, [string, number?]> = {
  1: ["Turn 1"], 2: ["Str 1-2"], 7: ["Turn 4"], 10: ["Str 5-6"], 11: ["Turn 6"], 12: ["Str 6-7"], 15: ["Turn 8"], 16: ["Str 8-9"],
  17: ["Turn 9"], 24: ["Str 12-13"], 26: ["Str 13-14"], 27: ["Turn 14"], 29: ["Turn 15"], 30: ["Str 0-1", 1709],
};
const sectionDark = (i: number) => i % 2 === 0;

const AXES = [
  { ticks: [["250", 166], ["200", 181.3], ["150", 197.3], ["100", 213.3], ["50", 229.3], ["-0", 245.3]], top: 160, bottom: 248, sub: 3.18 },
  { ticks: [["120", 253.3], ["100", 269.3], ["80", 286.3], ["60", 302.3], ["40", 318.3], ["20", 335.3]], top: 252, bottom: 342, sub: 4.1 },
  { ticks: [["1.0", 360.3], ["0.8", 376.3], ["0.6", 392.3], ["0.4", 409.3], ["0.2", 425.3], ["0.0", 441.3], ["-0.2", 458.3], ["-0.4", 474.3]], top: 350, bottom: 475, sub: 4.07 },
] as { ticks: [string, number][]; top: number; bottom: number; sub: number }[];

const timeX = (s: number) => 285 + s * 12.19;

function TimeGraph() {
  const times = Array.from({ length: 11 }, (_, i) => (i + 1) * 10);
  return (
    <svg width="1514" height="380" viewBox="239 118 1514 380" className="block bg-black">
      <g shapeRendering="crispEdges">
        <rect x="239.500" y="118.500" width="1512" height="379" fill="#000" stroke="#e05000" />
        <path d="M285 123.500H1733M285 138.500H1733" stroke="#f0f0f0" />
        <rect x="285" y="124" width="3" height="14" fill="#e00000" />
        <rect x="1730" y="124" width="4" height="14" fill="#e00000" />
        <rect x="285" y="140" width="1448" height="16" fill="#f0f0f0" />
        {SECTION_EDGES.slice(0, -1).map((x, i) => sectionDark(i) && (<rect key={i} x={x} y="141" width={SECTION_EDGES[i + 1] - x} height="14" fill="#323232" />))}
        <path d="M284.500 140V476.500M1733.500 140V476.500" stroke="#f0f0f0" />
        <path d="M284 157.500H1734" stroke="#f0f0f0" />
        {times.map((t) => (<path key={t} d={`M${Math.round(timeX(t)) + 0.5} 158V476`} stroke="#5c5c5c" strokeDasharray="1 1" />))}
        {AXES.flatMap((a) => a.ticks).map(([t, y]) => (
          <g key={t + y}>
            <path d={`M286 ${Math.floor(y) + 0.5}H1733`} stroke={t === "0.0" ? "#f0f0f0" : "#5c5c5c"} strokeDasharray="1 1" />
            <path d={`M278 ${Math.floor(y) + 0.5}h7`} stroke="#f0f0f0" />
          </g>
        ))}
        {AXES.map((a, k) => {
          const base = a.ticks[a.ticks.length - 1][1];
          const n = Math.floor((base - a.top) / a.sub);
          return Array.from({ length: n + 1 }, (_, i) => (<path key={`${k}-${i}`} d={`M281.500 ${Math.floor(base - i * a.sub) + 0.5}h3`} stroke="#f0f0f0" />));
        })}
        <path d="M285.500 142V476M1732.500 142V476" stroke="#e00000" strokeDasharray="3 3" />
        <path d="M285 248.500H1733M285 250.500H1733M285 342.500H1733M285 344.500H1733" stroke="#a0a0a0" />
        <path d="M284 476.500H1734" stroke="#f0f0f0" />
        {Array.from({ length: 59 }, (_, i) => (<path key={i} d={`M${Math.round(timeX((i + 1) * 2)) + 0.5} 477v${(i + 1) % 5 === 0 ? 4 : 2}`} stroke="#f0f0f0" />))}
      </g>
      {AXES.flatMap((a) => a.ticks).map(([t, y]) => (<Label key={t + y} x={274.500} y={y} anchor="end">{t}</Label>))}
      {times.map((t) => (<Label key={t} x={timeX(t) - 1} y={488.300} anchor="middle">{`${Math.floor(t / 60)}:${String(t % 60).padStart(2, "0")}`}</Label>))}
      <Label x={263} y={485.500}>m:s</Label>
      {SECTION_EDGES.slice(0, -1).map((x, i) => SECTION_NAMES[i] && (
        <Label key={i} x={SECTION_NAMES[i][1] ?? (x + SECTION_EDGES[i + 1]) / 2} y={148.300} anchor="middle" fill={sectionDark(i) ? "#e8e8e8" : "#303030"}>{SECTION_NAMES[i][0]}</Label>
      ))}
      <g fill="none" strokeWidth="1">
        <path d={tracePath(SPEED, false, 1)} stroke="#3399ff" strokeWidth="1.200" />
        <path d={tracePath(RIDE_R, true, 11)} stroke="#b56cff" />
        <path d={tracePath(RIDE_F, true, 23)} stroke="#3399ff" />
        <path d={tracePath(RAKE, true, 5, 1.6)} stroke="#40ff40" strokeWidth="1.200" />
        {RAKE_SPIKES.map(([x, a, b]) => (<path key={x} d={`M${x} ${a}V${b}`} stroke="#40ff40" strokeWidth="1.200" />))}
      </g>
      <g fill="#202020" fillOpacity=".75">
        <rect x="286" y="158" width="210" height="15" />
        <rect x="286" y="251" width="210" height="30" />
        <rect x="286" y="345" width="210" height="15" />
      </g>
      <rect x="287" y="164" width="4" height="4" fill="#d0d0d0" />
      <Label x={295} y={165.500} size={12.500} fill="#3399ff" w={76}>Speed [km/h]</Label>
      <Label x={426} y={165.500} size={12.500} fill="#3399ff" w={39}>186.16</Label>
      <Label x={295} y={258.500} size={12.500} fill="#3399ff" w={107}>Ride Height F [mm]</Label>
      <Label x={426} y={258.500} size={12.500} fill="#3399ff" w={32}>55.20</Label>
      <Label x={295} y={272.500} size={12.500} fill="#b56cff" w={107}>Ride Height R [mm]</Label>
      <Label x={426} y={272.500} size={12.500} fill="#b56cff" w={32}>67.12</Label>
      <Label x={295} y={352.500} size={12.500} fill="#40ff40" w={46}>Rake [°]</Label>
      <Label x={426} y={352.500} size={12.500} fill="#40ff40" w={25}>0.25</Label>
      <Label x={1007.500} y={131.300} anchor="middle">Lap 18</Label>
      <path d="M1018.500 124V476" stroke="#ffff00" />
      {[186.5, 296.5, 306.5, 421.5].map((y) => (<rect key={y} x="1012" y={y - 1.5} width="14" height="3" fill="#ffff00" />))}
      <defs><linearGradient id="thumb"><stop offset="0" stopColor="#666" /><stop offset=".5" stopColor="#d8d8d8" /><stop offset="1" stopColor="#777" /></linearGradient></defs>
      <rect x="1737.500" y="159" width="8" height="90" rx="3.500" fill="url(#thumb)" />
    </svg>
  );
}

/* ---------- track map ---------- */

/* [x, y, rake]; y counts on past the lower half of the circuit. */
const TRACK: [number, number, number][] = [
  [895, 111, 0.26], [1020, 114, 0.25], [1100, 119, 0.25], [1160, 121, 0.24], [1168, 121, 0.68], [1220, 128, 0.5], [1260, 140, 0.44], [1300, 165, 0.42], [1335, 205, 0.36], [1360, 250, 0.31], [1373, 300, 0.24],
  [1380, 350, 0.25], [1381, 430, 0.24], [1378, 500, 0.26], [1372, 570, 0.25], [1368, 650, 0.25], [1362, 720, 0.26], [1360, 780, 0.24], [1363, 850, 0.25], [1372, 900, 0.25], [1380, 930, 0.26], [1384, 950, 0.42], [1388, 1010, 0.4],
  [1385, 1060, 0.42], [1378, 1100, 0.28], [1367, 1135, 0.28], [1355, 1160, 0.48], [1340, 1210, 0.43], [1338, 1260, 0.38], [1348, 1310, 0.28], [1356, 1330, 0.48], [1364, 1350, 0.46], [1371, 1400, 0.4], [1367, 1435, 0.38],
  [1357, 1465, 0.3], [1330, 1505, 0.29], [1290, 1535, 0.24], [1245, 1560, 0.26], [1210, 1590, 0.26], [1180, 1625, 0.27], [1150, 1670, 0.26], [1110, 1745, 0.25], [1060, 1830, 0.26], [990, 1940, 0.26], [930, 2040, 0.25], [870, 2140, 0.25],
  [830, 2215, 0.26], [790, 2285, 0.25], [760, 2335, 0.2], [740, 2360, 0.24], [722, 2385, 0.7], [700, 2415, 0.65], [660, 2452, 0.57], [630, 2470, 0.48], [600, 2477, 0.35], [560, 2468, 0.29], [530, 2445, 0.26], [500, 2410, 0.25],
  [480, 2365, 0.25], [465, 2310, 0.24], [450, 2255, 0.26], [425, 2190, 0.26], [400, 2130, 0.25], [378, 2090, 0.27], [370, 2080, 0.72], [345, 2025, 0.66], [320, 1980, 0.55], [300, 1962, 0.36], [285, 1959, 0.2], [265, 1963, 0.25], [245, 1973, 0.3], [232, 1977, 0.43], [215, 1980, 0.33],
  [195, 1975, 0.28], [165, 1950, 0.26], [145, 1915, 0.24], [135, 1870, 0.25], [133, 1820, 0.27], [140, 1765, 0.26], [155, 1720, 0.25], [175, 1690, 0.25], [200, 1655, 0.25], [240, 1605, 0.25], [300, 1530, 0.26], [350, 1470, 0.26],
  [400, 1405, 0.25], [440, 1350, 0.26], [465, 1320, 0.32], [485, 1297, 0.4], [520, 1270, 0.4], [560, 1250, 0.42], [585, 1243, 0.28], [600, 1242, 0.24], [650, 1245, 0.24], [700, 1260, 0.25], [740, 1272, 0.26], [785, 1278, 0.24], [830, 1273, 0.25], [870, 1258, 0.25], [910, 1233, 0.26], [940, 1202, 0.29],
  [948, 1192, 0.72], [980, 1160, 0.68], [1015, 1137, 0.57], [1050, 1127, 0.5], [1080, 1135, 0.4], [1100, 1165, 0.28], [1107, 1205, 0.26], [1109, 1225, 0.3], [1109, 1240, 0.66], [1110, 1262, 0.58], [1115, 1280, 0.48], [1128, 1298, 0.35], [1143, 1306, 0.34], [1165, 1295, 0.25], [1190, 1260, 0.24],
  [1210, 1210, 0.24], [1222, 1160, 0.26], [1227, 1110, 0.26], [1222, 1060, 0.26], [1208, 1015, 0.25], [1185, 970, 0.25], [1150, 915, 0.26], [1100, 840, 0.25], [1050, 765, 0.26], [1000, 690, 0.26], [950, 615, 0.25], [900, 540, 0.26],
  [860, 480, 0.25], [822, 430, 0.27], [812, 415, 0.72], [780, 370, 0.64], [740, 337, 0.54], [710, 327, 0.5], [690, 327, 0.5], [660, 335, 0.36], [635, 360, 0.32], [620, 395, 0.28], [616, 430, 0.24], [612, 448, 0.28], [607, 465, 0.55], [590, 490, 0.46], [565, 507, 0.44],
  [550, 510, 0.4], [520, 500, 0.35], [501, 470, 0.3], [493, 430, 0.29], [496, 390, 0.24], [511, 350, 0.24], [535, 305, 0.26], [570, 255, 0.26], [610, 207, 0.27], [650, 170, 0.24], [700, 140, 0.24], [750, 122, 0.24], [800, 114, 0.25], [850, 111, 0.26],
];

const SCALE = ["#ff4040", "#ff7040", "#ff9f40", "#ffcf40", "#ffff40", "#cfff40", "#9fff40", "#70ff40", "#40ff40", "#40ff70", "#40ff9f", "#40ffcf", "#40ffff", "#40cfff", "#409fff", "#4070ff", "#4040ff"];
const SCALE_LABELS = ["1.09", "0.99", "0.90", "0.80", "0.70", "0.61", "0.51", "0.41", "0.32", "0.22", "0.12", "0.03", "-0.07", "-0.17", "-0.27", "-0.36"];

function scaleColor(v: number) {
  const idx = Math.ceil((1.09 - v) / 0.0967);
  return SCALE[Math.max(0, Math.min(16, idx))];
}

const TRACK_SEGMENTS = (() => {
  const p = TRACK.map(([x, y, v]) => [660 + x / 2.45, 490 + y / 3, v]);
  const n = p.length;
  const rnd = makeRandom(77);
  const pts: number[][] = [];
  for (let i = 0; i < n; i++) {
    const [a, b, c, d] = [p[(i + n - 1) % n], p[i], p[(i + 1) % n], p[(i + 2) % n]];
    const count = Math.max(2, Math.round(Math.hypot(c[0] - b[0], c[1] - b[1]) / 1.1));
    for (let k = 0; k < count; k++) {
      const u = k / count;
      const f = (j: number) => 0.5 * (2 * b[j] + (c[j] - a[j]) * u + (2 * a[j] - 5 * b[j] + 4 * c[j] - d[j]) * u * u + (3 * b[j] - a[j] - 3 * c[j] + d[j]) * u * u * u);
      pts.push([f(0), f(1), b[2] + (c[2] - b[2]) * u]);
    }
  }
  /* Even out hand-placed points along the centre line. */
  const m = pts.length;
  const smooth = pts.map((q, i) => {
    let sx = 0, sy = 0;
    for (let k = -5; k <= 5; k++) { const o = pts[(i + k + m) % m]; sx += o[0]; sy += o[1]; }
    return [sx / 11, sy / 11, q[2]];
  });
  const quads: { d: string; c: string }[] = [];
  let outline = "";
  for (let i = 0; i < m; i++) {
    const a = smooth[i], b = smooth[(i + 1) % m], z = smooth[(i + m - 1) % m], e = smooth[(i + 2) % m];
    const nrm = (q: number[], r: number[]) => { const dx = r[0] - q[0], dy = r[1] - q[1], l = Math.hypot(dx, dy) || 1; return [-dy / l, dx / l]; };
    const na = nrm(z, b), nb = nrm(a, e);
    outline += `${i ? "L" : "M"}${(a[0] + na[0] * 1.5).toFixed(1)} ${(a[1] + na[1] * 1.5).toFixed(1)}`;
    const r = rnd() * 2 - 1;
    const v = a[2] + r * r * r * (a[2] > 0.33 ? 0.11 : r < 0 ? 0.14 : 0.11);
    const h = 8.6;
    const ex = (b[0] - a[0]) * 0.25, ey = (b[1] - a[1]) * 0.25;
    quads.push({
      c: scaleColor(v),
      d: `M${(a[0] + na[0] * h).toFixed(1)} ${(a[1] + na[1] * h).toFixed(1)}L${(b[0] + nb[0] * h + ex).toFixed(1)} ${(b[1] + nb[1] * h + ey).toFixed(1)}L${(b[0] - nb[0] * h + ex).toFixed(1)} ${(b[1] - nb[1] * h + ey).toFixed(1)}L${(a[0] - na[0] * h).toFixed(1)} ${(a[1] - na[1] * h).toFixed(1)}Z`,
    });
  }
  return { quads, outline: outline + "Z" };
})();

function TrackMap() {
  return (
    <svg width="1514" height="847" viewBox="239 498 1514 847" className="block bg-black">
      <path d="M1025.500 503v8" stroke="#f00000" strokeWidth="5" />
      <path d={TRACK_SEGMENTS.outline} fill="none" stroke="#d3d3d3" strokeWidth="42.500" strokeLinejoin="round" shapeRendering="crispEdges" />
      <g shapeRendering="crispEdges">
        {TRACK_SEGMENTS.quads.map((q, i) => (<path key={i} d={q.d} fill={q.c} />))}
      </g>
      <path d="M1023.500 550.500h13v-5l9 8-9 9v-5.500h-13z" fill="#e00000" stroke="#909090" strokeWidth=".8" />
      <circle cx="736.700" cy="1051" r="12" fill="#f20000" stroke="#ffd0d0" strokeWidth=".7" />
      <Label x={247} y={514.500} size={11.500} fill="#d0d0d0" w={59}>Silverstone</Label>
      <Label x={1694} y={513.500} size={12.500} fill="#d0d0d0" w={46}>Rake [°]</Label>
      <rect x="1694.500" y="522.500" width="49" height="275" fill="none" stroke="#d0d0d0" shapeRendering="crispEdges" />
      {SCALE.map((c, i) => {
        const y = 524.5 + i * 16;
        const d = i === 0 ? `M1729.500 ${y + 13}v-8l6-5 6 5v8z` : i === 16 ? `M1729.500 ${y}v8l6 6 6-6v-8z` : `M1729.500 ${y}h12v13h-12z`;
        return <path key={c} d={d} fill={c} stroke="#d8d8d8" />;
      })}
      {SCALE_LABELS.map((t, i) => (<Label key={t} x={1727} y={538.500 + i * 16} size={12.400} anchor="end" fill="#d8d8d8" w={t.length === 5 ? 28.500 : 24.500}>{t}</Label>))}
    </svg>
  );
}

/* ---------- histograms ---------- */

type Hist = { samples: string; sw: number; name: string; w: number; color: string; top: number; first: number; bars: number[] };
const HISTS: Hist[] = [
  { samples: "23737 Samples, Zoom Linked", sw: 138, name: "Rake [°]", w: 46, color: "#40ff40", top: 141, first: 14, bars: [0.2, 0.4, 1.1, 3.2, 13, 27, 19.3, 7.1, 5.3, 4.8, 3.7, 2.8, 2.5, 2.3, 2.1, 2.1, 1.8, 0.7, 0.4] },
  { samples: "4598 Samples, Zoom Linked", sw: 132, name: "Rake Braking [°]", w: 88, color: "#ff0000", top: 441, first: 17, bars: [0.2, 0.5, 1.2, 1.6, 1.8, 5.1, 8.7, 10.1, 10.1, 11.6, 11.9, 10.6, 11.6, 8.9, 4.1, 1.8, 0.4] },
  { samples: "3484 Samples, Zoom Linked", sw: 132, name: "Rake Mid Throttle [°]", w: 117, color: "#ff6ad8", top: 740, first: 16, bars: [0.2, 0.9, 1.4, 4.4, 17, 18.8, 20.4, 13.3, 8, 2.8, 2.3, 1.6, 1.8, 3, 2.3, 1.1, 0.4] },
  { samples: "15409 Samples, Zoom Linked", sw: 138, name: "Rake WOT [°]", w: 79, color: "#3399ff", top: 1039, first: 14, bars: [0.2, 0.7, 1.6, 4.6, 19.5, 40.1, 25, 5.7, 1.6, 0.7, 0.2] },
];
const binX = (i: number) => Math.round(1798.5 + i * 13.68);

function Histograms() {
  return (
    <svg width="770" height="1227" viewBox="1753 118 770 1227" className="block bg-black">
      <path d="M1753 118.500H2523" stroke="#333" />
      {HISTS.map((h, k) => {
        const bottom = h.top + 282;
        const yOf = (p: number) => Math.round(bottom - p * 5.64);
        return (
          <g key={h.name}>
            <g shapeRendering="crispEdges">
              {Array.from({ length: 51 }, (_, i) => (<path key={i} d={`M${binX(i + 1) + 0.5} ${h.top}V${bottom}`} stroke="#686868" strokeDasharray="1 1" />))}
              {[10, 20, 30, 40].map((p) => (<path key={p} d={`M1799 ${yOf(p) + 0.5}H2510`} stroke="#686868" strokeDasharray="1 1" />))}
              {Array.from({ length: 26 }, (_, i) => (<path key={i} d={`M${i % 5 ? 1796 : 1795} ${yOf(i * 2) + 0.5}H1799`} stroke="#f0f0f0" />))}
              {h.bars.map((v, i) => {
                const x = binX(h.first + i);
                return <rect key={i} x={x + 0.5} y={yOf(v) + 0.5} width={binX(h.first + i + 1) - x} height={bottom - yOf(v)} fill={h.color} stroke="#d3d3d3" />;
              })}
              <rect x="1798.500" y={h.top + 0.5} width="712" height="282" fill="none" stroke="#d8d8d8" />
              <rect x="1799" y={h.top + 1} width={h.w + 16} height="14" fill="#202020" fillOpacity=".75" />
              {k === 3 && Array.from({ length: 13 }, (_, i) => (<path key={i} d={`M${binX(1 + i * 4) + 0.5} 1322v4`} stroke="#f0f0f0" />))}
            </g>
            {k === 0 && <rect x="1801" y="147" width="4" height="4" fill="#d0d0d0" />}
            <Label x={1809} y={h.top + 8.500} size={12.500} fill={h.color} w={h.w}>{h.name}</Label>
            <Label x={1798} y={h.top - 10.300} w={h.sw}>{h.samples}</Label>
            {[0, 10, 20, 30, 40, 50].map((p) => (<Label key={p} x={1791.500} y={yOf(p)} anchor="end">{p}</Label>))}
            <g transform={`translate(1763.500 ${h.top + 141}) rotate(-90)`}><Label x={0} y={0} size={11.500} anchor="middle" w={41}>Percent</Label></g>
            {k === 3 && Array.from({ length: 13 }, (_, i) => (<Label key={i} x={binX(1 + i * 4) - 0.5} y={1334} anchor="middle">{(-0.5 + i * 0.16).toFixed(2)}</Label>))}
          </g>
        );
      })}
    </svg>
  );
}

function RightTools() {
  const slot = "flex h-[22px] items-center justify-center";
  return (
    <div className="flex w-[24px] shrink-0 flex-col bg-gradient-to-r from-[#c6c6c6] to-[#9e9e9e]">
      <div className={slot}><Ico><rect x="1" y="4" width="11" height="11" fill="#fff" stroke="#567" /><path d="M3 9h7" stroke="#e0208a" /><path d="M3 12h7" stroke="#2050e0" /><path d="M3 6l5-5 7 1v4l-6 1-3 2z" fill="#e3b45c" stroke="#7a5a20" strokeWidth=".6" /></Ico></div>
      <div className={slot}><Ico><rect x="1" y="2" width="14" height="12" fill="#b9d2f6" stroke="#2f5aa8" /><rect x="3" y="4" width="10" height="8" fill="#4b83dc" /><path d="M4.500 6.500h6M4.500 9.500h6" stroke="#fff" /></Ico></div>
      <div className="mt-2 flex h-[22px] items-center justify-center font-['Liberation_Serif',serif] text-[16px] leading-none font-bold text-black">δ</div>
      <div className={slot}><Ico><path d="M5.500 1v14" stroke="#2c5a2c" strokeWidth="1.500" /><path d="M10.500 1v14" stroke="#3a6bd8" strokeWidth="2" /></Ico></div>
      <div className={`mt-2 ${slot}`}><Ico><circle cx="7" cy="6.500" r="5.200" fill="#e8f2fc" stroke="#6a84a4" strokeWidth="1.300" /><rect x="4.800" y="4" width="4.400" height="5" fill="none" stroke="#111" strokeWidth="1.200" /><path d="M10.500 10.500l4 4" stroke="#1e50c8" strokeWidth="3" /></Ico></div>
      <div className={slot}><Ico><circle cx="7" cy="7" r="5.500" fill="#d6d6d6" stroke="#f0f0f0" /><path d="M6 0v16" stroke="#b0b0b0" /><path d="M7 1v14M10 1v13" stroke="#f4f4f4" strokeWidth="1.500" /><path d="M11 10.500l4 4" stroke="#ececec" strokeWidth="3" /></Ico></div>
      <div className={`mt-[9px] ${slot}`}><ZoomTool kind="plus" /></div>
      <div className={slot}><ZoomTool kind="minus" /></div>
      <div className={slot}><ZoomTool kind="sun" /></div>
      <div className={slot}><ZoomTool kind="red" /></div>
      <div className={`mt-[7px] ${slot}`}><ZoomTool kind="plus" vertical /></div>
      <div className={slot}><ZoomTool kind="minus" vertical /></div>
      <div className={slot}><ZoomTool kind="sun" vertical /></div>
      <div className={`mt-2 ${slot}`}><Ico><rect x="0" y="0.500" width="16" height="4" fill="#d8ecff" /><path d="M0 4.500h16M1 1v3M4 1v3M7 1v3M10 1v3M13 1v3" stroke="#3f6fae" /><path d="M1 8h14M3.500 6L1 8l2.500 2M12.500 6L15 8l-2.500 2" stroke="#000" fill="none" /><rect x="0" y="11.500" width="16" height="4" fill="#d8ecff" /><path d="M0 11.500h16M1 12v3M4 12v3M7 12v3M10 12v3M13 12v3" stroke="#3f6fae" /></Ico></div>
    </div>
  );
}

/* ---------- page ---------- */

export default function App() {
  return (
    <div className={`flex h-[1366px] w-[2547px] flex-col overflow-hidden bg-[#c4c4c4] ${TAHOMA}`}>
      <TopBars />
      <div className="flex h-[1295px] shrink-0">
        <DataPanel />
        <div className="flex w-[2308px] flex-col bg-black">
          <div className="flex h-[30px] shrink-0 items-start pt-[2px] pl-[1px]">
            <span className="mt-[1px] mr-[2px] flex h-[12px] w-[12px] items-center justify-center border border-[#ff8080] bg-[#e00000] text-[9px] leading-none font-bold text-white">M</span>
            <span className="text-[10.5px] leading-[14px] tracking-[0.2px] whitespace-pre text-[#e4e4e4]">[1:58.680] Lap 18,5:18:49 PM, 1/5/2021,  , Silverstone,  [Silverstone-amr_v8_vantage_gt3-23-2021.01.05-17.18.48.ld]</span>
          </div>
          <LapStrip />
          <div className="flex min-h-0 flex-1">
            <div className="flex flex-1 flex-col">
              <WorksheetTabs />
              <div className="flex flex-1">
                <div className="flex w-[1514px] shrink-0 flex-col border-r border-[#333]">
                  <TimeGraph />
                  <TrackMap />
                </div>
                <Histograms />
              </div>
            </div>
            <RightTools />
          </div>
        </div>
      </div>
      <div className="flex h-[21px] shrink-0 items-end border-t border-[#dadada] bg-[#f0f0f0] text-[10.5px] font-bold text-black">
        <div className="h-[19px] w-[595px] border-r border-[#d0d0d0]" />
        <div className="h-[19px] w-[121px] border-r border-[#d0d0d0]" />
        <div className="flex h-[19px] w-[1155px] items-center border-r border-[#d0d0d0] pt-[2px] pl-[6px] whitespace-pre">
          <span className="mr-1 h-2 w-2 border border-black bg-[#f00000]" />
          <span className="w-[34px] tracking-[-0.3px]">Time</span>
          <span className="w-[111px] tracking-[0.2px]">60.197592 [s]</span>
          <span className="w-[58px] tracking-[0px]">Distance</span>
          <span className="tracking-[0px]">3099 [m]</span>
        </div>
        <div className="h-[19px] w-[358px] border-r border-[#d0d0d0]" />
        <div className="flex h-full flex-1 items-end justify-end">
          <svg width="10" height="10" viewBox="0 0 10 10" fill="#b0b0b0"><path d="M7 1h2v2H7zM7 4h2v2H7zM4 4h2v2H4zM7 7h2v2H7zM4 7h2v2H4zM1 7h2v2H1z" /></svg>
        </div>
      </div>
    </div>
  );
}
